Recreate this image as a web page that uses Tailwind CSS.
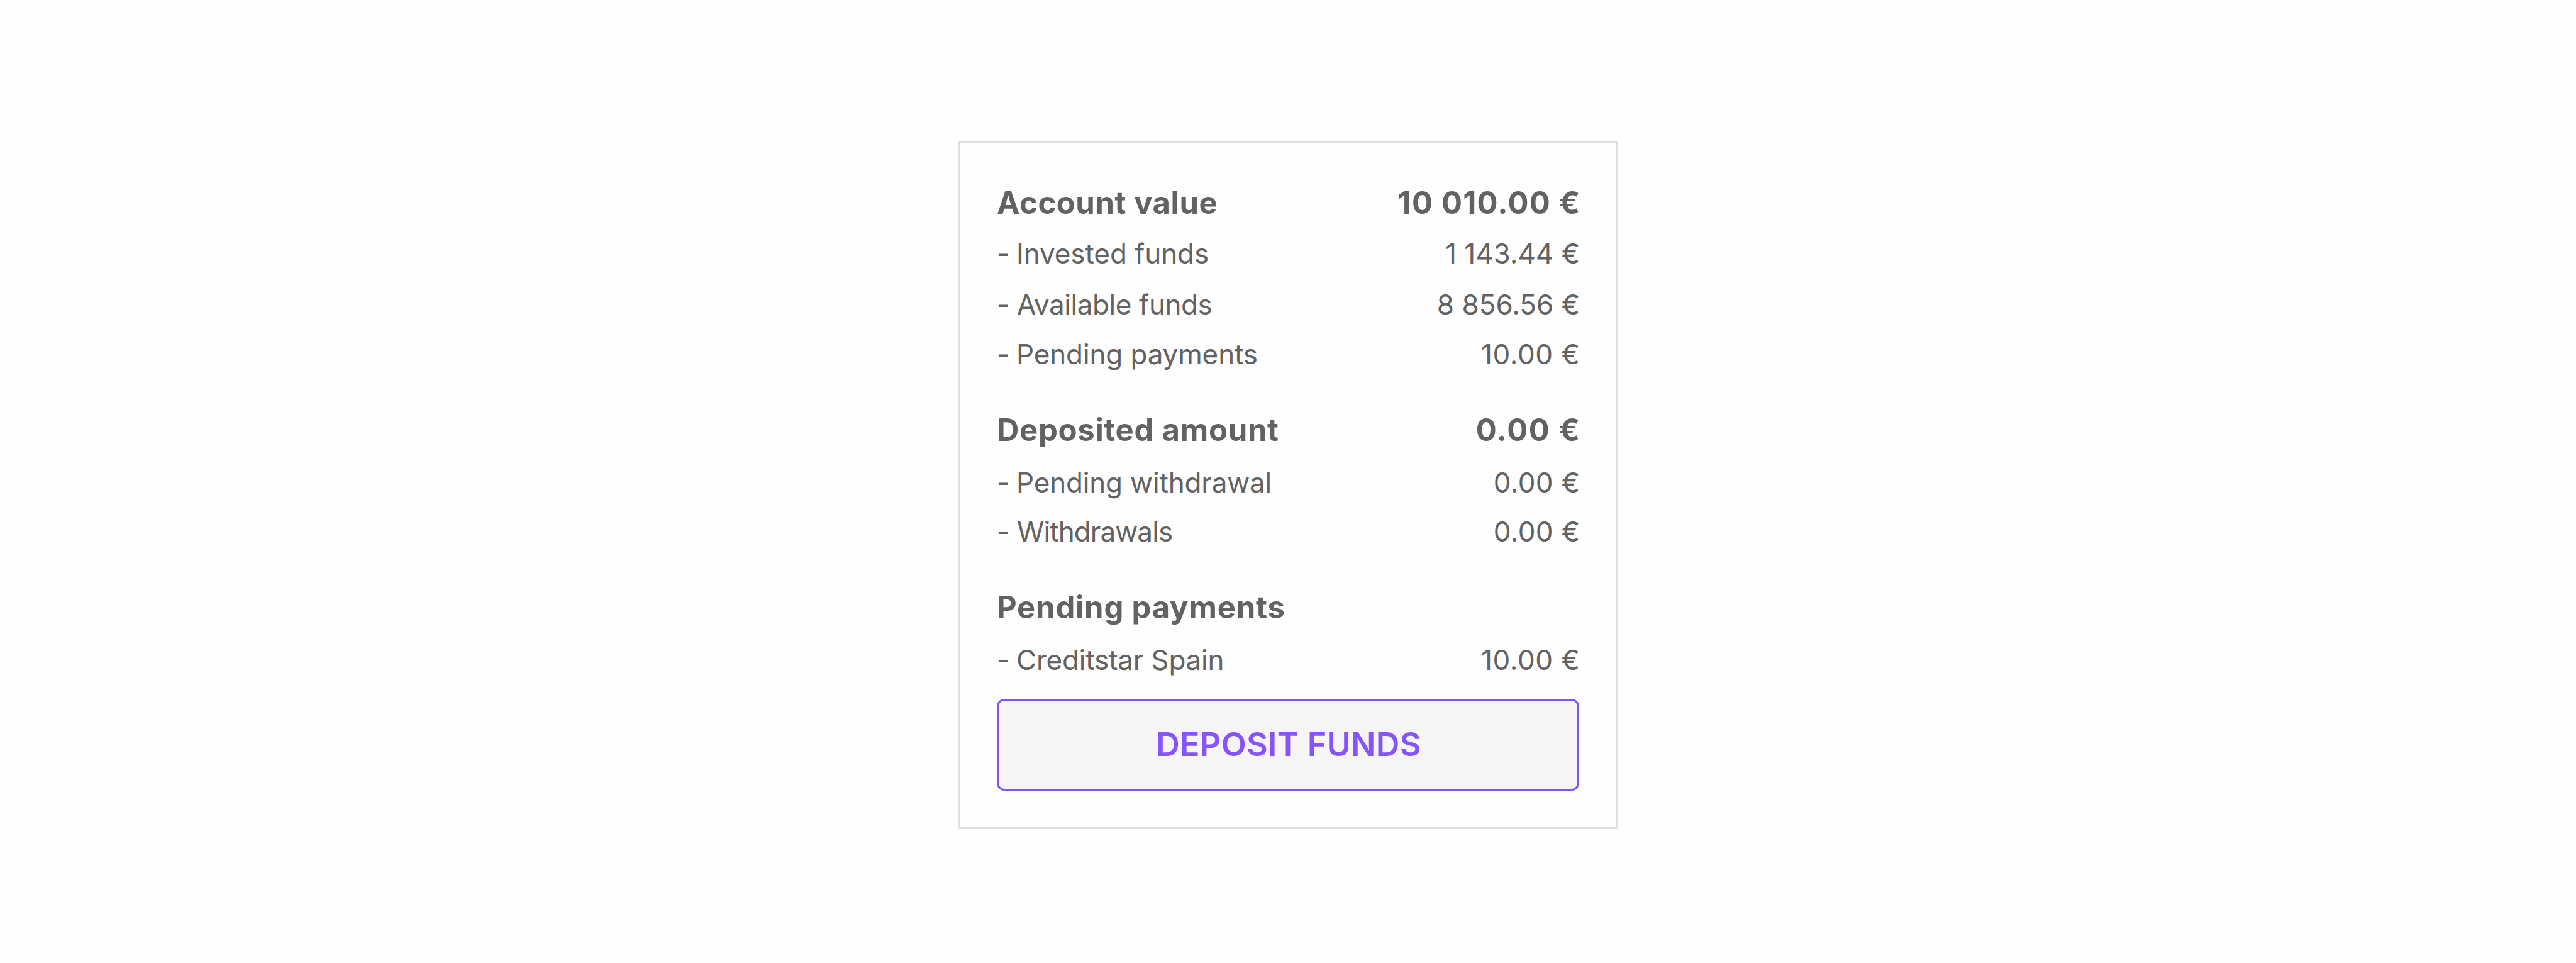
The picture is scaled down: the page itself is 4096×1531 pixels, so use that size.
<!DOCTYPE html>
<html lang="en">
<head>
<meta charset="utf-8">
<title>Account value</title>
<script src="https://cdn.jsdelivr.net/npm/@tailwindcss/browser@4"></script>
</head>
<body class="flex min-h-screen items-start justify-center bg-[#fefefe] pt-56 font-[Inter,sans-serif] text-[#626262]">
<main class="flex h-[1094px] w-[1048px] flex-col border-[3px] border-[#e0e0e0] px-[58px] pt-14 text-[44px] leading-[80px] whitespace-nowrap">

  <section>
    <h2 class="flex justify-between text-[49px] font-bold">
      <span class="tracking-[0.55px]">Account value</span>
      <span class="-mr-[2.5px] tracking-[1.2px]">10 010.00 €</span>
    </h2>
    <div class="flex">
      <span class="w-[31px]">-</span>
      <span class="grow tracking-[-0.09px]">Invested funds</span>
      <span class="-mr-px">1 143.44 €</span>
    </div>
    <div class="mt-px flex">
      <span class="w-8">-</span>
      <span class="grow tracking-[-0.42px]">Available funds</span>
      <span class="-mr-px">8 856.56 €</span>
    </div>
    <div class="-mt-px flex">
      <span class="w-[31px]">-</span>
      <span class="grow tracking-[-0.13px]">Pending payments</span>
      <span class="-mr-[1.5px] tracking-[0.6px]">10.00 €</span>
    </div>
  </section>

  <section class="mt-[41px]">
    <h2 class="flex justify-between text-[49px] font-bold">
      <span class="tracking-[0.7px]">Deposited amount</span>
      <span class="-mr-[2.5px] tracking-[1.5px]">0.00 €</span>
    </h2>
    <div class="mt-[3px] flex">
      <span class="w-[31px]">-</span>
      <span class="grow tracking-[-0.17px]">Pending withdrawal</span>
      <span class="-mr-[1.5px] tracking-[0.4px]">0.00 €</span>
    </div>
    <div class="-mt-0.5 flex">
      <span class="w-8">-</span>
      <span class="grow tracking-[-0.91px]">Withdrawals</span>
      <span class="-mr-[1.5px] tracking-[0.4px]">0.00 €</span>
    </div>
  </section>

  <section class="mt-[41px]">
    <h2 class="flex text-[49px] font-bold">
      <span class="tracking-[0.78px]">Pending payments</span>
    </h2>
    <div class="mt-[3px] flex">
      <span class="w-[31px]">-</span>
      <span class="grow tracking-[-0.21px]">Creditstar Spain</span>
      <span class="-mr-[1.5px] tracking-[0.6px]">10.00 €</span>
    </div>
  </section>

  <button class="mt-[22px] flex h-[146px] w-full shrink-0 items-center justify-center rounded-xl border-[3px] border-[#8455f4] bg-[#f5f5f5] pl-0.5 text-[52px] font-semibold tracking-[0.28px] text-[#8653fc]">DEPOSIT FUNDS</button>
</main>
</body>
</html>
